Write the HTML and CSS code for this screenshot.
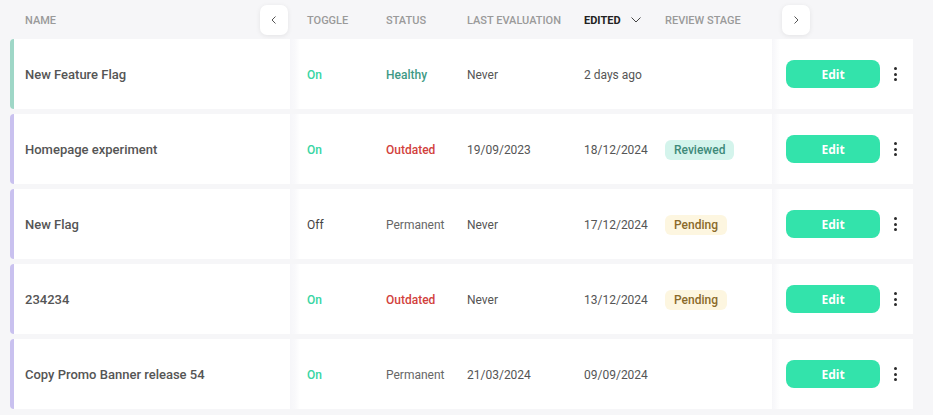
FILE: index.html
```html
<!DOCTYPE html>
<html>
<head>
<meta charset="utf-8">
<link rel="stylesheet" href="styles.css">
</head>
<body>
<div class="table">
  <div class="head">
    <div class="c-name hname">
      <span>Name</span>
      <button class="arrow"><svg width="10" height="10" viewBox="0 0 10 10"><path d="M6.5 1.5 L3 5 L6.5 8.5" fill="none" stroke="#555" stroke-width="1"/></svg></button>
    </div>
    <div class="mid">
      <div class="c-toggle">Toggle</div>
      <div class="c-status">Status</div>
      <div class="c-eval">Last evaluation</div>
      <div class="c-edited active">Edited <svg class="caret" width="12" height="8" viewBox="0 0 12 8"><path d="M1.5 1.5 L6 6 L10.5 1.5" fill="none" stroke="#444" stroke-width="1"/></svg></div>
      <div class="c-review">Review stage</div>
    </div>
    <div class="c-actions hact">
      <button class="arrow"><svg width="10" height="10" viewBox="0 0 10 10"><path d="M3.5 1.5 L7 5 L3.5 8.5" fill="none" stroke="#555" stroke-width="1"/></svg></button>
    </div>
  </div>

  <div class="row teal">
    <div class="c-name name">New Feature Flag</div>
    <div class="mid">
      <div class="c-toggle on">On</div>
      <div class="c-status healthy">Healthy</div>
      <div class="c-eval">Never</div>
      <div class="c-edited">2 days ago</div>
      <div class="c-review"></div>
    </div>
    <div class="c-actions"><button class="edit">Edit</button><span class="kebab"><i></i><i></i><i></i></span></div>
  </div>

  <div class="row">
    <div class="c-name name">Homepage experiment</div>
    <div class="mid">
      <div class="c-toggle on">On</div>
      <div class="c-status outdated">Outdated</div>
      <div class="c-eval">19/09/2023</div>
      <div class="c-edited">18/12/2024</div>
      <div class="c-review"><span class="badge reviewed">Reviewed</span></div>
    </div>
    <div class="c-actions"><button class="edit">Edit</button><span class="kebab"><i></i><i></i><i></i></span></div>
  </div>

  <div class="row">
    <div class="c-name name">New Flag</div>
    <div class="mid">
      <div class="c-toggle off">Off</div>
      <div class="c-status permanent">Permanent</div>
      <div class="c-eval">Never</div>
      <div class="c-edited">17/12/2024</div>
      <div class="c-review"><span class="badge pending">Pending</span></div>
    </div>
    <div class="c-actions"><button class="edit">Edit</button><span class="kebab"><i></i><i></i><i></i></span></div>
  </div>

  <div class="row">
    <div class="c-name name">234234</div>
    <div class="mid">
      <div class="c-toggle on">On</div>
      <div class="c-status outdated">Outdated</div>
      <div class="c-eval">Never</div>
      <div class="c-edited">13/12/2024</div>
      <div class="c-review"><span class="badge pending">Pending</span></div>
    </div>
    <div class="c-actions"><button class="edit">Edit</button><span class="kebab"><i></i><i></i><i></i></span></div>
  </div>

  <div class="row">
    <div class="c-name name">Copy Promo Banner release 54</div>
    <div class="mid">
      <div class="c-toggle on">On</div>
      <div class="c-status permanent">Permanent</div>
      <div class="c-eval">21/03/2024</div>
      <div class="c-edited">09/09/2024</div>
      <div class="c-review"></div>
    </div>
    <div class="c-actions"><button class="edit">Edit</button><span class="kebab"><i></i><i></i><i></i></span></div>
  </div>
</div>
</body>
</html>
```
FILE: styles.css
```css
* { box-sizing: border-box; }
html, body { margin: 0; padding: 0; }
body {
  background: #f6f6f8;
  font-family: Roboto, "Liberation Sans", sans-serif;
  width: 933px;
  height: 415px;
  overflow: hidden;
}
.table {
  display: flex;
  flex-direction: column;
  gap: 5px;
  padding-left: 10px;
  width: 913px;
}
.head {
  display: flex;
  align-items: center;
  height: 39px;
  padding-top: 1px;
  margin-bottom: -5px;
  font-size: 11px;
  font-weight: 500;
  text-transform: uppercase;
  color: #9a9a9a;
}
.row {
  display: flex;
  align-items: stretch;
  height: 70px;
  background: #fff;
  border-left: 4px solid #c9c1ef;
  border-radius: 4px;
  font-size: 12px;
  color: #555;
}
.row.teal { border-left-color: #9fd7c7; }

.c-name {
  width: 280px;
  flex: none;
  display: flex;
  align-items: center;
  padding-left: 15px;
}
.row .c-name { width: 276px; padding-left: 11px; padding-top: 1px; }
.hname { justify-content: space-between; padding-right: 2px; }
.name { font-size: 13px; font-weight: 500; color: #555; }

.mid {
  display: flex;
  align-items: center;
  flex: none;
  width: 482px;
  padding-left: 17px;
  height: 100%;
}
.row .mid {
  padding-top: 1px;
  background: linear-gradient(90deg, #f6f6f9 0, #f9f9fb 5px, #ffffff 10px);
}
.c-toggle { width: 79px; }
.c-status { width: 81px; }
.c-eval { width: 117px; }
.c-edited { width: 81px; display: flex; align-items: center; }
.c-review { width: 107px; }
.active { color: #222; font-weight: 700; }
.caret { margin-left: 9px; }

.c-actions {
  flex: none;
  width: 141px;
  display: flex;
  align-items: center;
  padding-left: 14px;
  height: 100%;
}
.row .c-actions {
  background: linear-gradient(90deg, #f6f6f9 0, #ffffff 8px);
}
.hact { padding-left: 10px; }

.arrow {
  width: 28px;
  height: 30px;
  border: none;
  border-radius: 7px;
  background: #fff;
  box-shadow: 0 1px 5px rgba(0,0,0,0.08);
  display: flex;
  align-items: center;
  justify-content: center;
  padding: 0;
}

.on { color: #38d5a3; font-weight: 500; }
.off { color: #444; }
.healthy { color: #3e9985; font-weight: 500; }
.outdated { color: #d2413d; font-weight: 500; }
.permanent { color: #666; }

.badge {
  display: inline-block;
  height: 20px;
  line-height: 20px;
  padding: 0 9px;
  border-radius: 6px;
  font-weight: 500;
  font-size: 12px;
}
.reviewed { background: #d4f4ec; color: #3e8a79; }
.pending { background: #fdf6e0; color: #8a6a2a; }

.edit {
  width: 94px;
  height: 28px;
  border: none;
  border-radius: 8px;
  background: #33e3ab;
  color: #fff;
  font-family: "Open Sans", "Liberation Sans", sans-serif;
  font-weight: 700;
  font-size: 12px;
  padding: 0;
}
.kebab {
  display: flex;
  flex-direction: column;
  gap: 2.5px;
  margin-left: 14px;
}
.kebab i {
  width: 3px;
  height: 3px;
  border-radius: 50%;
  background: #2a2a2a;
  display: block;
}
```
